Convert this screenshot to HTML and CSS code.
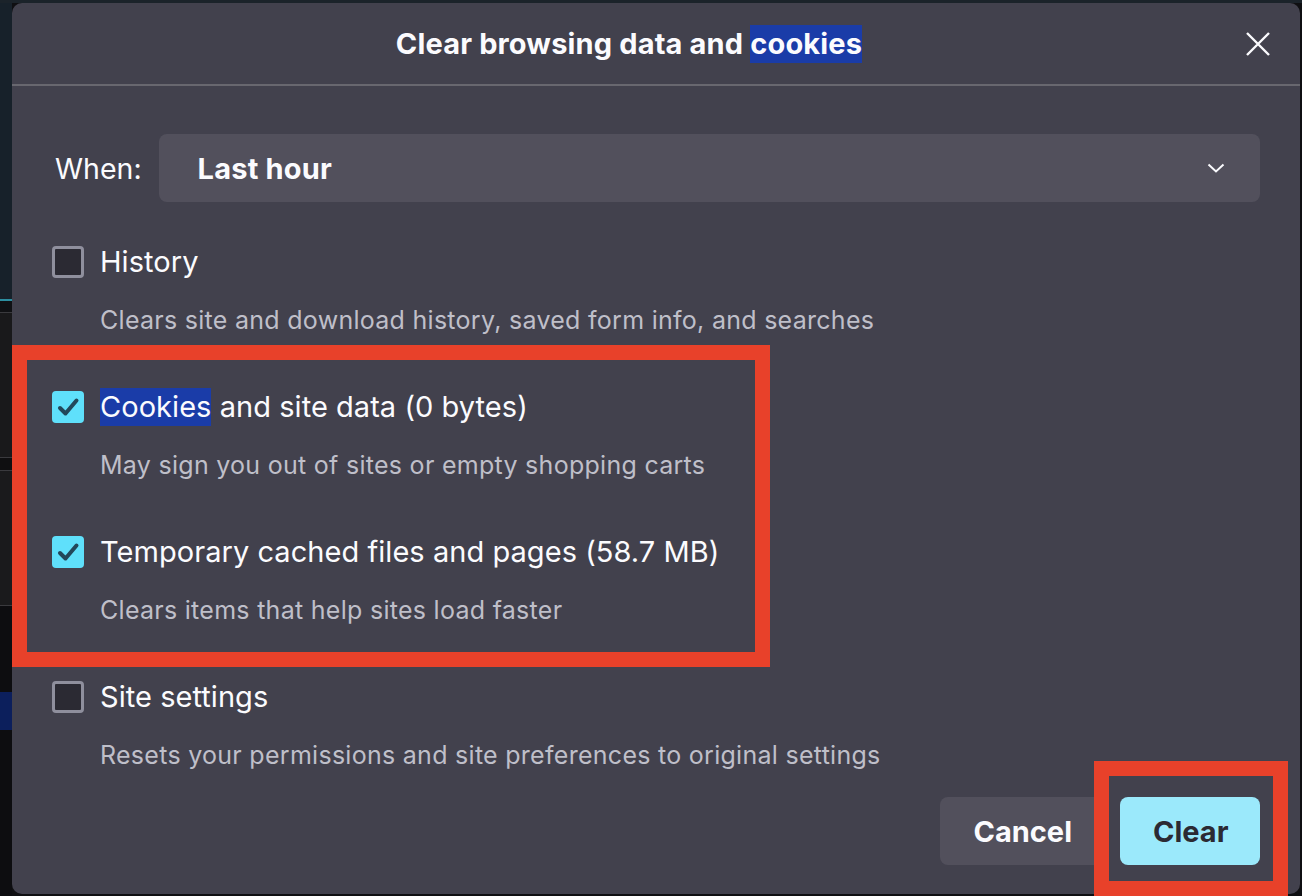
FILE: index.html
```html
<!DOCTYPE html>
<html lang="en">
<head>
<meta charset="utf-8">
<title>Clear browsing data and cookies</title>
<link rel="stylesheet" href="styles.css">
</head>
<body>
<div class="backdrop-strip"></div>
<div class="dialog">
  <header class="dialog-header">
    <h1 class="dialog-title">Clear browsing data and <span class="selected">cookies</span></h1>
    <button class="close-btn" aria-label="Close">
      <svg width="24" height="24" viewBox="0 0 24 24"><path d="M1 1 L23 23 M23 1 L1 23" stroke="#fbfbfe" stroke-width="2.4" fill="none"/></svg>
    </button>
  </header>
  <div class="dialog-body">
    <div class="when-row">
      <span class="when-label">When:</span>
      <div class="select">
        <span class="select-value">Last hour</span>
        <svg class="chevron" width="18" height="10" viewBox="0 0 18 10"><path d="M1.5 1.5 L9 8.5 L16.5 1.5" stroke="#fbfbfe" stroke-width="2" fill="none"/></svg>
      </div>
    </div>
    <div class="options">
      <div class="option">
        <div class="option-row"><span class="checkbox"></span><span class="option-label">History</span></div>
        <p class="option-desc">Clears site and download history, saved form info, and searches</p>
      </div>
      <div class="option">
        <div class="option-row"><span class="checkbox checked"><svg width="32" height="32" viewBox="0 0 32 32"><path d="M8 17 L13.5 22.5 L24.5 9.5" stroke="#22485b" stroke-width="4" stroke-linecap="round" stroke-linejoin="round" fill="none"/></svg></span><span class="option-label"><span class="selected">Cookies</span> and site data (0 bytes)</span></div>
        <p class="option-desc">May sign you out of sites or empty shopping carts</p>
      </div>
      <div class="option">
        <div class="option-row"><span class="checkbox checked"><svg width="32" height="32" viewBox="0 0 32 32"><path d="M8 17 L13.5 22.5 L24.5 9.5" stroke="#22485b" stroke-width="4" stroke-linecap="round" stroke-linejoin="round" fill="none"/></svg></span><span class="option-label">Temporary cached files and pages (58.7 MB)</span></div>
        <p class="option-desc">Clears items that help sites load faster</p>
      </div>
      <div class="option">
        <div class="option-row"><span class="checkbox"></span><span class="option-label">Site settings</span></div>
        <p class="option-desc">Resets your permissions and site preferences to original settings</p>
      </div>
    </div>
    <div class="footer">
      <button class="btn btn-secondary">Cancel</button>
      <button class="btn btn-primary">Clear</button>
    </div>
  </div>
  <div class="annotation annotation-options"></div>
  <div class="annotation annotation-clear"></div>
</div>
</body>
</html>
```

FILE: styles.css
```css
html, body {
  margin: 0;
  padding: 0;
  height: 896px;
  overflow: hidden;
}

body {
  display: flex;
  align-items: flex-start;
  background: #0f0f12;
  font-family: Inter, "Noto Sans", "Liberation Sans", sans-serif;
  color: #fbfbfe;
  border-top: 3px solid #1b232a;
}

.backdrop-strip {
  width: 12px;
  height: 893px;
  flex: none;
  background: linear-gradient(to bottom,
    #17212a 0, #17212a 296px,
    #2c8ea0 296px, #2c8ea0 298px,
    #101114 298px, #101114 309px,
    #3a3a3e 309px, #3a3a3e 310px,
    #19191b 310px, #19191b 454px,
    #3a3a3e 454px, #3a3a3e 455px,
    #0f0f11 455px, #0f0f11 467px,
    #3a3a3e 467px, #3a3a3e 468px,
    #1a1a1c 468px, #1a1a1c 602px,
    #3a3a3e 602px, #3a3a3e 603px,
    #0d0d10 603px, #0d0d10 689px,
    #0c1f5c 689px, #0c1f5c 727px,
    #0d0d10 727px);
}

.dialog {
  position: relative;
  width: 1288px;
  height: 891px;
  flex: none;
  background: #42414d;
  border-radius: 10px;
}

.dialog-header {
  display: flex;
  align-items: center;
  height: 81px;
  padding-right: 30px;
  border-bottom: 2px solid #68676f;
}

.dialog-title {
  flex: 1;
  margin: 0;
  text-align: center;
  font-size: 29px;
  font-weight: 700;
  letter-spacing: 0.15px;
}

.selected {
  background: #1a3ca8;
  padding: 1px 0 2px;
}

.close-btn {
  width: 24px;
  height: 24px;
  padding: 0;
  border: 0;
  background: none;
  display: flex;
}

.dialog-body {
  padding: 48px 40px 0 40px;
}

.when-row {
  display: flex;
  align-items: center;
  gap: 17px;
}

.when-label {
  font-size: 28.5px;
  padding-left: 3px;
}

.select {
  flex: 1;
  height: 68px;
  display: flex;
  align-items: center;
  justify-content: space-between;
  padding: 0 35px 0 39px;
  background: #52505c;
  border-radius: 8px;
}

.select-value {
  font-size: 29px;
  font-weight: 700;
  letter-spacing: 0.2px;
}

.options {
  display: flex;
  flex-direction: column;
  gap: 56px;
  margin-top: 44px;
}

.option-row {
  display: flex;
  align-items: center;
  gap: 16px;
  height: 32px;
}

.checkbox {
  width: 32px;
  height: 32px;
  box-sizing: border-box;
  border: 3px solid #8f8f9d;
  border-radius: 4px;
  background: #2b2a33;
  flex: none;
  position: relative;
}

.checkbox.checked {
  border: 0;
  background: #5fe0fb;
}

.checkbox svg {
  display: block;
}

.option-label {
  font-size: 29px;
  line-height: 34px;
  letter-spacing: 0.05px;
}

.option-desc {
  margin: 27px 0 0 48px;
  font-size: 25px;
  line-height: 30px;
  letter-spacing: 0.28px;
  color: #bfbfc9;
}

.footer {
  display: flex;
  justify-content: flex-end;
  gap: 15px;
  margin-top: 27px;
}

.btn {
  height: 68px;
  padding: 0 33px;
  border: 0;
  border-radius: 8px;
  font-family: inherit;
  font-size: 29px;
  font-weight: 700;
}

.btn-secondary {
  background: #52505c;
  color: #fbfbfe;
}

.btn-primary {
  width: 140px;
  background: #9be9fb;
  color: #2b2a33;
}

.annotation {
  position: absolute;
  border: 15px solid #e8412a;
  box-sizing: border-box;
  pointer-events: none;
}

.annotation-options {
  left: 0;
  top: 342px;
  width: 758px;
  height: 322px;
}

.annotation-clear {
  left: 1082px;
  top: 758px;
  width: 194px;
  height: 135px;
}
```
